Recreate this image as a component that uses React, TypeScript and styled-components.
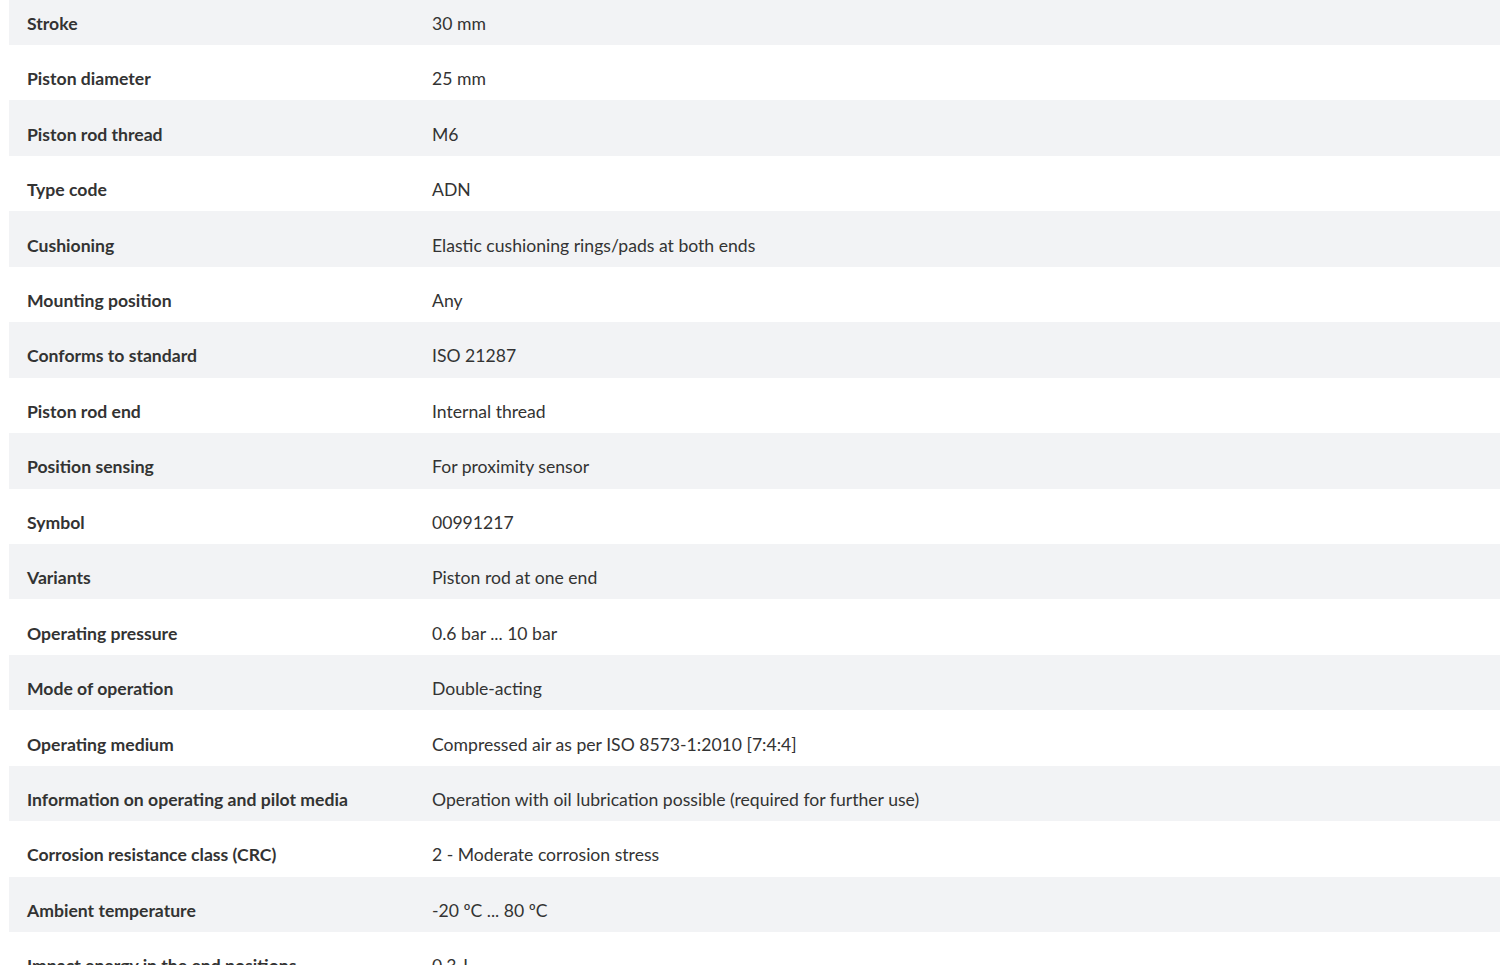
import React from 'react'
import styled, { createGlobalStyle } from 'styled-components'

const GlobalStyle = createGlobalStyle`
  body {
    margin: 0;
    padding: 0 0 0 9px;
    background: #ffffff;
    font-family: Lato, "Liberation Sans", sans-serif;
    overflow: hidden;
  }
`

const specs: [string, string][] = [
  ['Stroke', '30 mm'],
  ['Piston diameter', '25 mm'],
  ['Piston rod thread', 'M6'],
  ['Type code', 'ADN'],
  ['Cushioning', 'Elastic cushioning rings/pads at both ends'],
  ['Mounting position', 'Any'],
  ['Conforms to standard', 'ISO 21287'],
  ['Piston rod end', 'Internal thread'],
  ['Position sensing', 'For proximity sensor'],
  ['Symbol', '00991217'],
  ['Variants', 'Piston rod at one end'],
  ['Operating pressure', '0.6 bar ... 10 bar'],
  ['Mode of operation', 'Double-acting'],
  ['Operating medium', 'Compressed air as per ISO 8573-1:2010 [7:4:4]'],
  ['Information on operating and pilot media', 'Operation with oil lubrication possible (required for further use)'],
  ['Corrosion resistance class (CRC)', '2 - Moderate corrosion stress'],
  ['Ambient temperature', '-20 ºC ... 80 ºC'],
  ['Impact energy in the end positions', '0.3 J'],
]

const SpecTable = styled.div`
  margin-top: -10.4px;
  display: flex;
  flex-direction: column;
`

const Row = styled.div<{ $shaded: boolean }>`
  display: grid;
  grid-template-columns: 405px 1fr;
  height: 55.44px;
  box-sizing: border-box;
  padding-top: 12px;
  align-items: center;
  background: ${(p) => (p.$shaded ? '#f2f3f5' : '#ffffff')};
`

const Label = styled.div`
  padding-left: 18px;
  font-size: 17.6px;
  font-weight: 700;
  color: #333333;
`

const Value = styled.div`
  padding-left: 18px;
  font-size: 17.6px;
  font-weight: 400;
  color: #333333;
`

export default function App() {
  return (
    <>
      <GlobalStyle />
      <SpecTable>
        {specs.map(([label, value], i) => (
          <Row key={label} $shaded={i % 2 === 0}>
            <Label>{label}</Label>
            <Value>{value}</Value>
          </Row>
        ))}
      </SpecTable>
    </>
  )
}
